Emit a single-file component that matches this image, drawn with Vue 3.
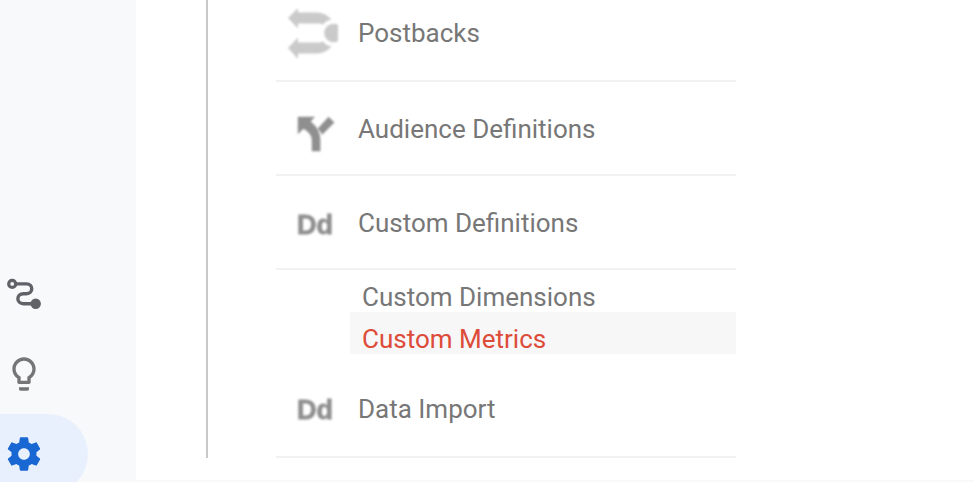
<template>
  <div class="admin-page">
    <nav class="sidebar">
      <a class="nav-item" aria-label="Attribution">
        <svg viewBox="0 0 40 40" class="nav-icon attribution">
          <path d="M12 9.9H22.5C29.5 9.9 29.5 19.7 22.5 19.7H19.5C12 19.7 12 29.7 19.5 29.7H31" fill="none" stroke="currentColor" stroke-width="3.4" />
          <circle cx="8.2" cy="9.9" r="3.5" fill="none" stroke="currentColor" stroke-width="3.2" />
          <circle cx="31.7" cy="29.8" r="5.2" fill="currentColor" />
        </svg>
      </a>
      <a class="nav-item" aria-label="Discover">
        <svg viewBox="0 0 24 24" class="nav-icon">
          <path fill="currentColor" d="M9 21c0 .55.45 1 1 1h4c.55 0 1-.45 1-1v-1H9v1zm3-19C8.14 2 5 5.14 5 9c0 2.38 1.19 4.47 3 5.74V17c0 .55.45 1 1 1h6c.55 0 1-.45 1-1v-2.26c1.81-1.27 3-3.36 3-5.74 0-3.86-3.14-7-7-7zm2.85 11.1l-.85.6V16h-4v-2.3l-.85-.6C7.8 12.16 7 10.63 7 9c0-2.76 2.24-5 5-5s5 2.24 5 5c0 1.63-.8 3.16-2.15 4.1z" />
        </svg>
      </a>
      <a class="nav-item active" aria-label="Admin">
        <svg viewBox="0 0 24 24" class="nav-icon">
          <path fill="currentColor" d="M19.43 12.98c.04-.32.07-.64.07-.98s-.03-.66-.07-.98l2.11-1.65c.19-.15.24-.42.12-.64l-2-3.46c-.12-.22-.39-.3-.61-.22l-2.49 1c-.52-.4-1.08-.73-1.69-.98l-.38-2.65C14.46 2.18 14.25 2 14 2h-4c-.25 0-.46.18-.49.42l-.38 2.65c-.61.25-1.17.59-1.69.98l-2.49-1c-.23-.09-.49 0-.61.22l-2 3.46c-.13.22-.07.49.12.64l2.11 1.65c-.04.32-.07.65-.07.98s.03.66.07.98l-2.11 1.65c-.19.15-.24.42-.12.64l2 3.46c.12.22.39.3.61.22l2.49-1c.52.4 1.08.73 1.69.98l.38 2.65c.03.24.24.42.49.42h4c.25 0 .46-.18.49-.42l.38-2.65c.61-.25 1.17-.59 1.69-.98l2.49 1c.23.09.49 0 .61-.22l2-3.46c.12-.22.07-.49-.12-.64l-2.11-1.65zM12 15.5c-1.93 0-3.5-1.57-3.5-3.5s1.57-3.5 3.5-3.5 3.5 1.57 3.5 3.5-1.57 3.5-3.5 3.5z" />
        </svg>
      </a>
    </nav>

    <main class="content">
      <div class="column">
        <ul class="menu">
          <li v-for="item in items" :key="item.label" :class="['menu-group', item.icon]">
            <div class="menu-row">
              <span class="menu-icon">
                <svg v-if="item.icon === 'postbacks'" width="50" height="52" viewBox="0 0 50 52" class="soft">
                  <path fill="#cacaca" d="M0 10L10 0V4.5H29Q37 4.5 43.5 11.5Q38 12.5 35 16.5L32 15.5H10V20.5ZM0 40L10 29.5V34.5H32L35 33.5Q38 37.5 43.5 38.5Q37 45.5 29 45.5H10V51Z" />
                  <circle cx="45.5" cy="25" r="9.3" fill="#cacaca" />
                </svg>
                <svg v-else-if="item.icon === 'audience'" width="38" height="36" viewBox="0 0 38 36" class="soft">
                  <path fill="#8f8f8f" d="M.8 .8H18L13.7 5.4Q23.4 13 23.4 24V35.2H14.8V24Q14.8 17.5 6.5 12.7L.8 18.3ZM20.8 12.4L31.6 .8L37.4 6.6L25.2 18.8Q23.5 15.5 20.8 12.4Z" />
                </svg>
                <span v-else class="dd soft">Dd</span>
              </span>
              <span class="menu-label">{{ item.label }}</span>
            </div>
            <ul v-if="item.children" class="submenu">
              <li
                v-for="child in item.children"
                :key="child"
                :class="['submenu-item', { selected: child === selected }]"
              >
                {{ child }}
              </li>
            </ul>
          </li>
        </ul>
      </div>
      <div class="page-bottom"></div>
    </main>
  </div>
</template>

<script setup>
import { ref } from 'vue'

const selected = ref('Custom Metrics')

const items = [
  { label: 'Postbacks', icon: 'postbacks' },
  { label: 'Audience Definitions', icon: 'audience' },
  {
    label: 'Custom Definitions',
    icon: 'definitions',
    children: ['Custom Dimensions', 'Custom Metrics']
  },
  { label: 'Data Import', icon: 'import' }
]
</script>

<style>
body {
  margin: 0;
  overflow: hidden;
}
</style>

<style scoped>
.admin-page {
  display: flex;
  width: 100%;
  height: 482px;
  overflow: hidden;
  background: #fff;
  color: #777;
  font-family: Roboto, "Liberation Sans", sans-serif;
  font-size: 26px;
}

.sidebar {
  display: flex;
  flex-direction: column;
  flex: none;
  box-sizing: border-box;
  width: 136px;
  padding-top: 254px;
  background: #f8f9fb;
}

.nav-item {
  display: flex;
  align-items: center;
  flex: none;
  box-sizing: border-box;
  width: 88px;
  height: 80px;
  padding-left: 4px;
  border-radius: 0 40px 40px 0;
  color: #757575;
}

.nav-item.active {
  background: #e8f0fe;
  color: #1967d2;
}

.nav-icon {
  display: block;
  width: 40px;
  height: 40px;
}

.nav-icon.attribution {
  color: #5f6368;
}

.content {
  display: flex;
  flex-direction: column;
  flex: 1;
}

.column {
  flex: none;
  box-sizing: border-box;
  height: 458px;
  margin-left: 70px;
  padding-left: 68px;
  border-left: 2px solid #c8c8c8;
}

.menu,
.submenu {
  margin: 0;
  padding: 0;
  list-style: none;
}

.menu {
  width: 460px;
}

.menu-row {
  display: flex;
  align-items: center;
  box-sizing: border-box;
  height: 94px;
  border-bottom: 2px solid #f1f1f1;
}

.postbacks .menu-row {
  height: 82px;
  padding-bottom: 13px;
}

.menu-icon {
  display: flex;
  justify-content: center;
  flex: none;
  width: 82px;
  box-sizing: border-box;
  padding-right: 4px;
}

.postbacks .menu-icon {
  padding-right: 8px;
}

.audience .menu-icon {
  padding: 11px 2px 0 0;
}

.definitions .menu-icon {
  padding-top: 6px;
}

.soft {
  filter: blur(0.8px);
}

.dd {
  color: #8f8f8f;
  font: bold 27px/30px "Liberation Sans", Arial, sans-serif;
  -webkit-text-stroke: 0.8px #8f8f8f;
}

.menu-label {
  line-height: 32px;
  white-space: nowrap;
}

.audience .menu-label,
.definitions .menu-label {
  padding-top: 2px;
}

.postbacks .menu-label,
.import .menu-label {
  padding-bottom: 2px;
}

.submenu {
  margin-left: 74px;
  padding-bottom: 10px;
}

.submenu-item {
  box-sizing: border-box;
  height: 42px;
  padding: 11px 0 0 12px;
  line-height: 32px;
}

.submenu-item.selected {
  background: #f7f7f7;
  color: #dd4b39;
}

.page-bottom {
  height: 2px;
  margin-top: auto;
  background: #f8f9fb;
}
</style>
